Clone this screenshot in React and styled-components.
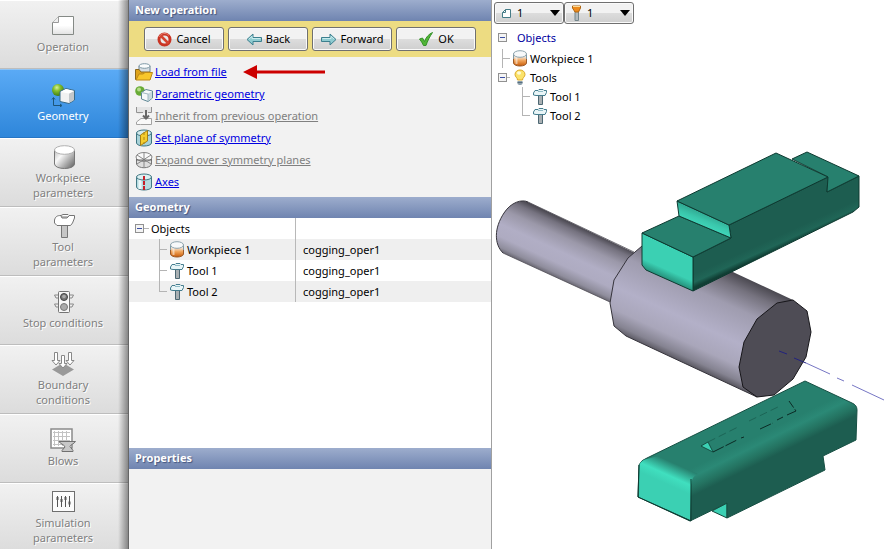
import styled, { createGlobalStyle } from "styled-components";

const steps = [
    { label: "Operation", icon: <PageIcon /> },
    { label: "Geometry", icon: <GeometryIcon />, active: true },
    { label: "Workpiece parameters", icon: <GreyCylinderIcon /> },
    { label: "Tool parameters", icon: <GreyHammerIcon /> },
    { label: "Stop conditions", icon: <TrafficIcon /> },
    { label: "Boundary conditions", icon: <BoundaryIcon /> },
    { label: "Blows", icon: <BlowsIcon /> },
    { label: "Simulation parameters", icon: <SlidersIcon /> },
];

const objects = [
    { name: "Workpiece 1", file: "cogging_oper1", icon: <WorkpieceIcon /> },
    { name: "Tool 1", file: "cogging_oper1", icon: <HammerIcon /> },
    { name: "Tool 2", file: "cogging_oper1", icon: <HammerIcon />, last: true },
];

export default function App() {
    return (
        <>
            <GlobalStyle />
            <Page>
                <Sidebar>
                    {steps.map((step) => (
                        <Step key={step.label} $active={step.active}>
                            {step.icon}
                            <StepLabel>{step.label}</StepLabel>
                        </Step>
                    ))}
                </Sidebar>

                <Panel>
                    <PanelTitle>New operation</PanelTitle>
                    <Wizard>
                        <WizardButton><CancelIcon />Cancel</WizardButton>
                        <WizardButton><ArrowIcon back />Back</WizardButton>
                        <WizardButton><ArrowIcon />Forward</WizardButton>
                        <WizardButton><CheckIcon />OK</WizardButton>
                    </Wizard>
                    <Actions>
                        <li><FolderIcon /><a href="#load">Load from file</a><Pointer /></li>
                        <li><ParametricIcon /><a href="#parametric">Parametric geometry</a></li>
                        <li><InheritIcon /><a href="#inherit" aria-disabled="true">Inherit from previous operation</a></li>
                        <li><PlaneIcon /><a href="#plane">Set plane of symmetry</a></li>
                        <li><ExpandIcon /><a href="#expand" aria-disabled="true">Expand over symmetry planes</a></li>
                        <li><AxesIcon /><a href="#axes">Axes</a></li>
                    </Actions>
                    <PanelTitle>Geometry</PanelTitle>
                    <TableArea>
                        <ObjectTable>
                            <tbody>
                                <tr>
                                    <td><Cell><Expander width={14} line />Objects</Cell></td>
                                    <td></td>
                                </tr>
                                {objects.map((item) => (
                                    <tr key={item.name}>
                                        <td>
                                            <Cell>
                                                <Branch width={32} height={21} x={24} last={item.last} />
                                                {item.icon}{item.name}
                                            </Cell>
                                        </td>
                                        <td>{item.file}</td>
                                    </tr>
                                ))}
                            </tbody>
                        </ObjectTable>
                    </TableArea>
                    <PanelTitle>Properties</PanelTitle>
                    <Properties />
                </Panel>

                <Viewport>
                    <Toolbar>
                        <Picker>
                            <SmallPageIcon />
                            <select aria-label="Operation"><option>1</option></select>
                            <Caret />
                        </Picker>
                        <Picker>
                            <FunnelIcon />
                            <select aria-label="Filter"><option>1</option></select>
                            <Caret />
                        </Picker>
                    </Toolbar>
                    <Tree>
                        <TreeHead><Expander width={14} />Objects</TreeHead>
                        <TreeRow><Branch width={12} height={19} x={4} />
                            <WorkpieceIcon />Workpiece 1</TreeRow>
                        <TreeRow><Expander width={12} line /><BulbIcon />Tools</TreeRow>
                        <TreeRow><Branch width={32} height={19} x={24} />
                            <HammerIcon />Tool 1</TreeRow>
                        <TreeRow><Branch width={32} height={19} x={24} last />
                            <HammerIcon />Tool 2</TreeRow>
                    </Tree>
                    <Scene />
                </Viewport>
            </Page>
        </>
    )
}

/* sidebar icons */

function PageIcon() {
    return (
        <svg width="24" height="24" viewBox="0 0 24 24">
            <defs>
                <linearGradient id="page" x2="0" y2="1">
                    <stop offset="0.5" stopColor="#fff" /><stop offset="1" stopColor="#e2e2e2" />
                </linearGradient>
            </defs>
            <path d="M7.5 2.5H22.5V20.5H1.5V8.5Z" fill="url(#page)" stroke="#858a86" />
            <path d="M7.5 2.5V8.5H1.5" fill="#eee" stroke="#9a9a9a" />
        </svg>
    )
}

function GeometryIcon() {
    return (
        <svg width="24" height="24" viewBox="0 0 24 24">
            <defs>
                <radialGradient id="ball" cx=".4" cy=".3" r=".7">
                    <stop offset="0" stopColor="#d8f29a" /><stop offset=".4" stopColor="#86c02e" /><stop offset="1" stopColor="#3f7d12" />
                </radialGradient>
            </defs>
            <circle cx="7" cy="7" r="6" fill="url(#ball)" />
            <path d="M2.5 15V22.5H10M1 16.5L2.5 14.5L4 16.5M9 21L11 22.5L9 24" fill="none" stroke="#1d5577" />
            <path d="M9 8.5L15 5.5L23.5 7.5V17L18 20.5L9 18.5Z" fill="#f2f2f2" stroke="#396b88" />
            <path d="M18 10.5L23 8V17L18 20Z" fill="#c3c7ca" />
            <path d="M9.5 9L15 6L23 8L18 10.5Z" fill="#fff" />
        </svg>
    )
}

function GreyCylinderIcon() {
    return (
        <svg width="24" height="24" viewBox="0 0 24 24">
            <defs>
                <linearGradient id="gc" x2="1" y2=".8">
                    <stop offset="0" stopColor="#bbb" /><stop offset=".35" stopColor="#f8f8f8" /><stop offset="1" stopColor="#6f6f6f" />
                </linearGradient>
            </defs>
            <path d="M3.5 5V19C4 25 23 25 23.5 19V5Z" fill="url(#gc)" stroke="#777" />
            <ellipse cx="13.5" cy="5" rx="10" ry="4.3" fill="#fff" stroke="#b0b0b0" />
        </svg>
    )
}

function GreyHammerIcon() {
    return (
        <svg width="24" height="24" viewBox="0 0 24 24">
            <path d="M10.5 9H16.5V23.5H10.5Z" fill="#c6c6c6" stroke="#777" />
            <path d="M3.5 6C4.5 2.5 6 1.5 10 1.5L12 .5H17L18 1.5H23.5V4L21.5 9L19.5 11.5H6L3.5 9Z" fill="#fff" stroke="#747474" />
            <path d="M10 2L11 4H16L18 2" fill="#bbb" stroke="#777" />
        </svg>
    )
}

function TrafficIcon() {
    return (
        <svg width="24" height="24" viewBox="0 0 24 24">
            <path d="M7 5H3.5L5 8H7M19 5H22.5L21 8H19M7 14H3.5L5 17H7M19 14H22.5L21 17H19" fill="#eee" stroke="#888" />
            <rect x="7.5" y="1.5" width="11" height="21" rx="1" fill="#f7f7f7" stroke="#747474" />
            <circle cx="13" cy="7" r="3.5" fill="#777" stroke="#444" />
            <circle cx="13" cy="17" r="3.5" fill="#aaa" stroke="#777" />
            <circle cx="13" cy="6.5" r="1.8" fill="#aaa" />
        </svg>
    )
}

function BoundaryIcon() {
    return (
        <svg width="24" height="24" viewBox="0 0 24 24">
            <path d="M12 11L23 17.5L12 24L1 17.5Z" fill="#999" />
            <path d="M3.5 .5H6.5V8.5H9L5 13L1 8.5H3.5ZM17.5 .5H20.5V8.5H23L19 13L15 8.5H17.5ZM10.5 3.5H13.5V11.5H16L12 16L8 11.5H10.5Z" fill="#fff" stroke="#888" />
        </svg>
    )
}

function BlowsIcon() {
    return (
        <svg width="26" height="24" viewBox="0 0 26 24">
            <rect x="1" y="1" width="21" height="19" fill="#fff" stroke="#8a8a8a" strokeWidth="1.5" />
            <path d="M3 4.5H20M3 8.5H20M3 12.5H20M3 16.5H20M4.5 3V18M8.5 3V18M12.5 3V18M16.5 3V18" stroke="#c3c3c3" />
            <path d="M9 13.5H25.5C24 16 21 16 20 18.5L23 22.5V23.5H12V22.5L15 19C14 16 10 16 9 13.5Z" fill="#c8c8c8" stroke="#707070" />
        </svg>
    )
}

function SlidersIcon() {
    return (
        <svg width="24" height="24" viewBox="0 0 24 24">
            <rect x="1.5" y="1.5" width="22" height="20" fill="#fcfcfc" stroke="#6f6f6f" />
            <path d="M6.5 6V17M10.5 6V17M14.5 6V17M18.5 6V17" stroke="#555" />
            <path d="M5.5 8.5H7.5M9.5 10.5H11.5M13.5 8.5H15.5M17.5 13H19.5" stroke="#555" strokeWidth="3" />
        </svg>
    )
}

/* toolbar and list icons */

function CancelIcon() {
    return (
        <svg width="15" height="15" viewBox="0 0 15 15">
            <circle cx="7.5" cy="7.5" r="5.5" fill="#e9e9e9" stroke="#c93423" strokeWidth="3" />
            <path d="M3.5 3.5L11.5 11.5" stroke="#d54431" strokeWidth="2.5" />
            <path d="M2 5A6 6 0 0 1 12 3.5" fill="none" stroke="#e88375" />
        </svg>
    )
}

function ArrowIcon({ back }) {
    return (
        <svg width="16" height="13" viewBox="0 0 16 13">
            <g transform={back ? undefined : "matrix(-1 0 0 1 16 0)"}>
                <path d="M1 6.5L7 1V4.5H15.5V8.5H7V12Z" fill="#8fcbd0" stroke="#3c7f8e" />
                <path d="M3 6L6 3.3V5.5H14.5" fill="none" stroke="#c9ecee" />
            </g>
        </svg>
    )
}

function CheckIcon() {
    return (
        <svg width="16" height="16" viewBox="0 0 16 16">
            <path d="M1.5 8L4.5 7L6.5 10.5C8 6 11 3 14.5 1.5C11.5 6 9.5 10 8 14.5H5.5C4.5 12 3 10 1.5 8Z" fill="#51b536" stroke="#35912a" />
        </svg>
    )
}

function FolderIcon() {
    return (
        <svg width="18" height="18" viewBox="0 0 18 18">
            <path d="M4 3V12H15V3Z" fill="#d6dde2" stroke="#6a8492" />
            <ellipse cx="9.5" cy="3" rx="5.5" ry="2.3" fill="#fafcfc" stroke="#7d98a5" />
            <path d="M.5 16.5V6.5H4L6 9H15V16.5Z" fill="#dfa31a" stroke="#8a681e" />
            <path d="M1 17L4 11H8L10 9.5H17.5L15 17Z" fill="#f8c62b" stroke="#bd8919" />
        </svg>
    )
}

function ParametricIcon() {
    return (
        <svg width="18" height="18" viewBox="0 0 18 18">
            <circle cx="5" cy="6" r="4.8" fill="#68ab36" />
            <circle cx="4" cy="4.5" r="2" fill="#b6dc8a" />
            <path d="M6.5 7.5L11 4.5L17.5 6V13L13 16.5L6.5 14Z" fill="#f5f9fa" stroke="#5e8794" />
            <path d="M13 8.5L17 6.5V13L13 16Z" fill="#c7d8de" />
            <path d="M6.5 7.5L13 9V16" fill="none" stroke="#9eb9c2" />
        </svg>
    )
}

function InheritIcon() {
    return (
        <svg width="18" height="18" viewBox="0 0 18 18">
            <path d="M1.5 0V6L4 7.5L7 6H16.5V0Z" fill="#e4e4e4" />
            <path d="M1.5 0V5.5M16.5 0V5.5H13M1.5 5.5H8" fill="none" stroke="#929292" />
            <path d="M5.5 17.5H16.5V11.5H6L1.5 15V17.5Z" fill="#f9f9f9" stroke="#a2a2a2" />
            <path d="M11 3V11M8 8.5L11 11.5L14 8.5" fill="none" stroke="#666" strokeWidth="2" />
        </svg>
    )
}

function PlaneIcon() {
    return (
        <svg width="18" height="18" viewBox="0 0 18 18">
            <path d="M1.5 4V14C2 18 16 18 16.5 14V4Z" fill="#a8d2d8" stroke="#3e7582" />
            <ellipse cx="9" cy="4" rx="7.5" ry="3" fill="#d1eaed" stroke="#3e7582" />
            <path d="M5.5 6L12.5 1.5V12L5.5 16.5Z" fill="#f4cd2d" stroke="#a77f13" />
            <path d="M9 3V15" stroke="#ad8616" strokeDasharray="3 2" />
        </svg>
    )
}

function ExpandIcon() {
    return (
        <svg width="18" height="18" viewBox="0 0 18 18">
            <path d="M1.5 5V13C3 18 15 18 16.5 13V5Z" fill="#ddd" stroke="#777" />
            <ellipse cx="9" cy="6" rx="8" ry="4.5" fill="#fafafa" stroke="#888" />
            <path d="M9 2V16M2 4L16 13M16 4L2 13" fill="none" stroke="#888" />
            <path d="M1 9H17" stroke="#666" />
        </svg>
    )
}

function AxesIcon() {
    return (
        <svg width="18" height="18" viewBox="0 0 18 18">
            <path d="M1.5 4V14C2 18 16 18 16.5 14V4Z" fill="#b5dce1" stroke="#437985" />
            <path d="M5 6V16" stroke="#edf8f9" strokeWidth="3" />
            <ellipse cx="9" cy="4" rx="7.5" ry="3" fill="#ddf0f2" stroke="#437985" />
            <path d="M9 3V17" stroke="#c7202a" strokeWidth="2" strokeDasharray="4 1" />
        </svg>
    )
}

function Pointer() {
    return (
        <svg width="82" height="16" viewBox="0 0 82 16">
            <path d="M0 8L14 1V6.5H82V9.5H14V15Z" fill="#cc0000" />
        </svg>
    )
}

function WorkpieceIcon() {
    return (
        <svg width="16" height="17" viewBox="0 0 16 17">
            <defs>
                <linearGradient id="wp" x2="0" y2="1">
                    <stop offset=".2" stopColor="#f3ece6" /><stop offset=".55" stopColor="#f0a45a" /><stop offset="1" stopColor="#c85b08" />
                </linearGradient>
            </defs>
            <path d="M1.5 4V13C2 17 14 17 14.5 13V4Z" fill="url(#wp)" stroke="#9a5a2a" />
            <path d="M4.5 7V14" stroke="#fff" strokeOpacity=".5" strokeWidth="2" />
            <path d="M1.5 9V4M14.5 9V4" stroke="#8199a3" />
            <ellipse cx="8" cy="4" rx="6.5" ry="3.3" fill="#f7f9fa" stroke="#8ea4ad" />
        </svg>
    )
}

function HammerIcon() {
    return (
        <svg width="16" height="17" viewBox="0 0 16 17">
            <path d="M6.5 6H10.5V16.5H6.5Z" fill="#a9b0b3" stroke="#4d6873" />
            <path d="M1.5 5L3 2.5H6L7 1.5H11L12 2.5H14.5V4.5L13 7.5H4L1.5 7Z" fill="#e9f5f7" stroke="#457d8e" />
            <path d="M6 3.5H11" stroke="#8fbcc7" />
        </svg>
    )
}

function BulbIcon() {
    return (
        <svg width="16" height="17" viewBox="0 0 16 17">
            <path d="M5.5 11C5.5 8.5 3 8 3 5.5C3 -.5 13 -.5 13 5.5C13 8 10.5 8.5 10.5 11Z" fill="#fbe36b" stroke="#dca928" />
            <ellipse cx="7" cy="4" rx="2" ry="1.7" fill="#fffbd9" />
            <path d="M5.5 12H10.5V15L9 16H7L5.5 15Z" fill="#8ea1ae" />
            <path d="M5.5 13.5H10.5" stroke="#586f80" />
        </svg>
    )
}

function SmallPageIcon() {
    return (
        <svg width="9" height="9" viewBox="0 0 9 9">
            <path d="M3.5 .5H8.5V8.5H.5V3.5Z" fill="#fff" stroke="#467c87" />
            <path d="M3.5 .5V3.5H.5" fill="none" stroke="#467c87" />
        </svg>
    )
}

function FunnelIcon() {
    return (
        <svg width="9" height="16" viewBox="0 0 9 16">
            <path d="M3 6H6.5V15.5H3Z" fill="#b2babd" stroke="#75868c" />
            <path d="M.5 1H8.5V3L6.5 7H3L.5 3Z" fill="#ee8b1d" stroke="#ae6613" />
            <path d="M1 1.5H8" stroke="#fcdb96" />
        </svg>
    )
}

function Caret() {
    return (
        <svg width="10" height="6" viewBox="0 0 10 6">
            <path d="M0 0H10L5 6Z" fill="#000" />
        </svg>
    )
}

function Expander({ width, line }) {
    return (
        <svg width={width} height="11">
            <rect x=".5" y="1.5" width="8" height="8" fill="#f4f4f4" stroke="#919191" />
            <path d="M2 5.5H7" stroke="#3b4fa4" />
            {line && <path d={`M9 5.5H${width}`} stroke="#b4b4b4" />}
        </svg>
    )
}

function Branch({ width, height, x, last }) {
    const middle = Math.floor(height / 2) + 0.5;
    return (
        <svg width={width} height={height}>
            <path d={`M${x + 0.5} 0V${last ? middle : height}M${x} ${middle}H${width}`} fill="none" stroke="#b4b4b4" />
        </svg>
    )
}

/* workpiece between the two tools */

function Scene() {
    return (
        <SceneSvg viewBox="492 125 392 424" preserveAspectRatio="xMinYMin meet" role="img" aria-label="Workpiece and tools">
            <defs>
                <linearGradient id="thin" gradientUnits="userSpaceOnUse" x1="528" y1="202" x2="504" y2="254">
                    <stop offset="0" stopColor="#45434b" />
                    <stop offset=".12" stopColor="#75727f" />
                    <stop offset=".3" stopColor="#9b98a9" />
                    <stop offset=".55" stopColor="#b1aec5" />
                    <stop offset=".75" stopColor="#aeabc1" />
                    <stop offset=".92" stopColor="#8f8d9c" />
                    <stop offset="1" stopColor="#64626c" />
                </linearGradient>
                <linearGradient id="thick" gradientUnits="userSpaceOnUse" x1="793" y1="300" x2="750" y2="394">
                    <stop offset="0" stopColor="#4b4951" />
                    <stop offset=".12" stopColor="#75727e" />
                    <stop offset=".3" stopColor="#9f9caf" />
                    <stop offset=".6" stopColor="#b3b0c8" />
                    <stop offset=".8" stopColor="#a9a6ba" />
                    <stop offset=".93" stopColor="#858391" />
                    <stop offset="1" stopColor="#56545d" />
                </linearGradient>
                <linearGradient id="side" gradientUnits="userSpaceOnUse" x1="765" y1="242" x2="770" y2="253">
                    <stop offset="0" stopColor="#1d5d50" />
                    <stop offset=".6" stopColor="#206657" />
                    <stop offset="1" stopColor="#103e34" />
                </linearGradient>
                <linearGradient id="front" gradientUnits="userSpaceOnUse" x1="670" y1="271" x2="666" y2="280">
                    <stop offset="0" stopColor="#3bd0b3" />
                    <stop offset="1" stopColor="#238a75" />
                </linearGradient>
                <linearGradient id="step" gradientUnits="userSpaceOnUse" x1="704" y1="213" x2="699" y2="226">
                    <stop offset="0" stopColor="#31aa93" />
                    <stop offset=".5" stopColor="#3ac7ac" />
                    <stop offset="1" stopColor="#40d8bb" />
                </linearGradient>
                <linearGradient id="round" gradientUnits="userSpaceOnUse" x1="640" y1="462" x2="673" y2="529">
                    <stop offset=".38" stopColor="#27806e" />
                    <stop offset=".49" stopColor="#2b8976" />
                    <stop offset=".62" stopColor="#247361" />
                    <stop offset=".72" stopColor="#1d5d50" />
                </linearGradient>
                <linearGradient id="roundFront" gradientUnits="userSpaceOnUse" x1="671" y1="462" x2="662" y2="482">
                    <stop offset="0" stopColor="#27806e" />
                    <stop offset=".6" stopColor="#40dfbf" />
                    <stop offset="1" stopColor="#3bd0b3" />
                </linearGradient>
            </defs>

            <path d="M528 202C522 199 511 202 504 213C494 228 494 244 503 253L612 303L635 253Z" fill="url(#thin)" />
            <path d="M528 202C522 199 511 202 504 213C494 228 494 244 503 253" fill="none" stroke="#36343c" />
            <path d="M528 202L634 252M503 253L610 302" stroke="#504e57" strokeWidth=".8" />

            <path d="M642 246L628 258L614 280L610 303L614 326L626 336L757 397L793 300L660 238Z" fill="url(#thick)" />
            <path d="M642 246L628 258L614 280L610 303L614 326L626 336L757 397" fill="none" stroke="#36343c" />
            <path d="M777 303L793 300L807 311L811 332L806 357L793 379L774 395L757 397L743 387L739 367L744 342L757 319Z" fill="#4e4c55" stroke="#17161a" />
            <path d="M779 351L787 354M794 358L806 363" stroke="#22227e" />
            <path d="M806 363L830 374M837 378L844 381M852 385L884 400" stroke="#7676c4" />

            <g stroke="#0e3a31" strokeLinejoin="round">
                <path d="M693 257L731 238L729 225L828 177L827 192L859 176V207L853 212L693 291Z" fill="url(#side)" />
                <path d="M642 233L693 257V291L646 270L642 265Z" fill="url(#front)" />
                <path d="M642 233L679 216L731 238L693 257Z" fill="#27806e" />
                <path d="M677 201L729 225L731 238L679 216Z" fill="url(#step)" />
                <path d="M792 159L807 152L859 176L827 192L828 177Z" fill="#27806e" />
                <path d="M677 201L776 153L828 177L729 225Z" fill="#27806e" />
            </g>

            <path d="M712 511L727 503V518Z" fill="#3bd0b3" stroke="#12463b" />
            <path d="M639 465Q641 460 647 458L805 381L852 403Q857 405 857 410L856 440L823 456L825 470L727 518V503L690 521L638 497Z" fill="url(#round)" stroke="#164f43" strokeLinejoin="round" />
            <path d="M639.5 465Q641 460 647 459L658 456L698 474Q691 477 691 485L690 520L639 497Z" fill="url(#roundFront)" />
            <path d="M691 479V521L638 497L639 465" fill="none" stroke="#0e3a31" />
            <path d="M701 446L708 442L713 452Z" fill="#3bd0b3" stroke="#0e3a31" strokeWidth=".8" />
            <path d="M713 452L737 440M741 438L744 437M760 429L773 423M777 420L783 417M787 415L796 411L789 401" fill="none" stroke="#0b2b25" strokeDasharray="12 2" />
            <path d="M708 442L738 427M749 421L780 406" stroke="#1c6556" strokeDasharray="8 4" />
        </SceneSvg>
    )
}

const GlobalStyle = createGlobalStyle`
    * {
        box-sizing: border-box;
    }
    body {
        margin: 0;
        background: #fff;
        color: #000;
        font: 11px/14px "Noto Sans", "Open Sans", sans-serif;
    }
    button, select {
        font: inherit;
        color: inherit;
    }
    svg {
        flex: none;
        display: block;
    }
`

const Page = styled.div`
    display: grid;
    grid-template-columns: 129px 363px 1fr;
    height: 100vh;
    overflow: hidden;
`

const Sidebar = styled.nav`
    position: relative;
    display: flex;
    flex-direction: column;
    overflow: hidden;
    border-right: 1px solid #666;
    background: #e6e6e6;

    &::after {
        content: "";
        position: absolute;
        top: 0;
        right: 0;
        bottom: 0;
        width: 10px;
        pointer-events: none;
        background: linear-gradient(to right, transparent, rgba(0, 0, 0, 0.4));
    }
`

const Step = styled.button`
    flex: none;
    display: flex;
    flex-direction: column;
    align-items: center;
    justify-content: center;
    gap: 1px;
    height: 69px;
    padding: 0 2px 1px 0;
    border: 0;
    border-top: 1px solid ${(p) => (p.$active ? "#8fc4f5" : "#fff")};
    border-bottom: 1px solid ${(p) => (p.$active ? "#2675c4" : "#bdbdbd")};
    color: ${(p) => (p.$active ? "#fff" : "#808080")};
    text-shadow: ${(p) => (p.$active ? "none" : "1px 1px 0 #fff")};
    background: ${(p) => (p.$active
        ? "linear-gradient(#5aaaf5, #2e86da)"
        : "linear-gradient(#f1f1f1, #dcdcdc)")};
`

const StepLabel = styled.span`
    max-width: 82px;
    line-height: 15px;
    text-align: center;
`

const Panel = styled.main`
    display: flex;
    flex-direction: column;
    border-right: 1px solid #a0a0a0;
    background: #f2f2f2;
`

const PanelTitle = styled.h2`
    flex: none;
    height: 21px;
    margin: 0;
    padding: 0 6px;
    font-size: 11px;
    line-height: 20px;
    color: #fff;
    text-shadow: 1px 1px 1px #44557e;
    background: linear-gradient(#9dadcd, #6f84b0);
`

const Wizard = styled.div`
    flex: none;
    display: flex;
    justify-content: center;
    gap: 4px;
    padding: 6px 0;
    background: #eddc82;
`

const WizardButton = styled.button`
    display: flex;
    align-items: center;
    justify-content: center;
    gap: 4px;
    width: 80px;
    height: 24px;
    padding: 0;
    border: 1px solid #707070;
    border-radius: 3px;
    box-shadow: inset 0 0 0 1px #fafafa;
    background: linear-gradient(#f2f2f2 50%, #dddddd 50%, #cfcfcf);
`

const Actions = styled.ul`
    flex: none;
    margin: 0;
    padding: 4px 6px;
    list-style: none;

    li {
        display: flex;
        align-items: center;
        gap: 2px;
        height: 22px;
    }
    a {
        color: #0000e0;
        margin-right: 14px;
    }
    a[aria-disabled] {
        color: #808080;
    }
`

const TableArea = styled.div`
    flex: 1;
    background: #fff;
`

const ObjectTable = styled.table`
    width: 100%;
    table-layout: fixed;
    border-collapse: collapse;

    tr:nth-child(even) {
        background: #efefef;
    }
    td {
        height: 21px;
        padding: 0 7px;
    }
    td:first-child {
        width: 46%;
        padding: 0 0 0 6px;
        border-right: 1px solid #b8b8b8;
    }
`

const Cell = styled.div`
    display: flex;
    align-items: center;
    gap: 2px;
    height: 21px;
`

const Properties = styled.div`
    flex: none;
    height: 80px;
`

const Viewport = styled.section`
    display: flex;
    flex-direction: column;
    min-width: 0;
    background: #fff;
`

const Toolbar = styled.div`
    display: flex;
    padding: 2px;
`

const Picker = styled.label`
    display: flex;
    align-items: center;
    gap: 6px;
    width: 70px;
    height: 22px;
    padding: 0 3px 0 7px;
    border: 1px solid #707070;
    border-radius: 3px;
    box-shadow: inset 0 0 0 1px #fafafa;
    background: linear-gradient(#f2f2f2 50%, #dddddd 50%, #cfcfcf);

    select {
        flex: 1;
        min-width: 0;
        padding: 0;
        border: 0;
        appearance: none;
        background: transparent;
    }
`

const Tree = styled.ul`
    margin: 0;
    padding: 0 6px;
    list-style: none;
`

const TreeRow = styled.li`
    display: flex;
    align-items: center;
    gap: 2px;
    height: 19px;
`

const TreeHead = styled(TreeRow)`
    height: 23px;
    gap: 5px;
    color: #0000a0;
`

const SceneSvg = styled.svg`
    flex: 1;
    min-height: 0;
    width: 100%;
`
